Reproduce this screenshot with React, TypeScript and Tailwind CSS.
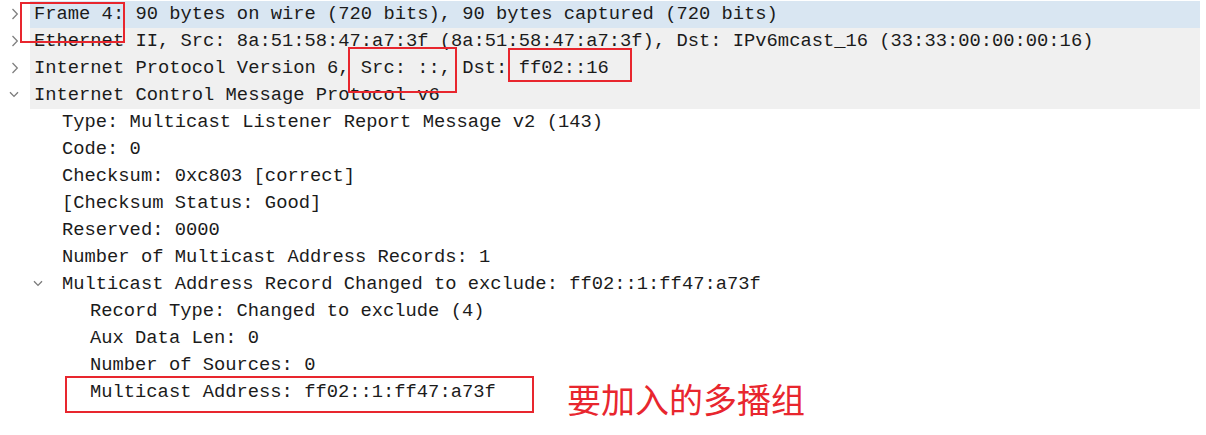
import React from "react";

type Row = {
  text: string;
  level: 0 | 1 | 2;
  arrow?: "right" | "down";
  bg?: "blue" | "gray";
};

const rows: Row[] = [
  { text: "Frame 4: 90 bytes on wire (720 bits), 90 bytes captured (720 bits)", level: 0, arrow: "right", bg: "blue" },
  { text: "Ethernet II, Src: 8a:51:58:47:a7:3f (8a:51:58:47:a7:3f), Dst: IPv6mcast_16 (33:33:00:00:00:16)", level: 0, arrow: "right", bg: "gray" },
  { text: "Internet Protocol Version 6, Src: ::, Dst: ff02::16", level: 0, arrow: "right", bg: "gray" },
  { text: "Internet Control Message Protocol v6", level: 0, arrow: "down", bg: "gray" },
  { text: "Type: Multicast Listener Report Message v2 (143)", level: 1 },
  { text: "Code: 0", level: 1 },
  { text: "Checksum: 0xc803 [correct]", level: 1 },
  { text: "[Checksum Status: Good]", level: 1 },
  { text: "Reserved: 0000", level: 1 },
  { text: "Number of Multicast Address Records: 1", level: 1 },
  { text: "Multicast Address Record Changed to exclude: ff02::1:ff47:a73f", level: 1, arrow: "down" },
  { text: "Record Type: Changed to exclude (4)", level: 2 },
  { text: "Aux Data Len: 0", level: 2 },
  { text: "Number of Sources: 0", level: 2 },
  { text: "Multicast Address: ff02::1:ff47:a73f", level: 2 },
];

const indentClass = ["pl-0", "pl-[28px]", "pl-[56px]"];

function ChevronRight() {
  return (
    <svg width="8" height="12" viewBox="0 0 8 12" className="block">
      <path d="M1.5 1 L6.3 6 L1.5 11" fill="none" stroke="#808080" strokeWidth="1.3" />
    </svg>
  );
}

function ChevronDown() {
  return (
    <svg width="10" height="7" viewBox="0 0 10 7" className="block">
      <path d="M1 1.2 L5 5.4 L9 1.2" fill="none" stroke="#7a7a7a" strokeWidth="1.3" />
    </svg>
  );
}

function TreeRow({ row }: { row: Row }) {
  const bgClass =
    row.bg === "blue" ? "bg-[#d9e6f2] mr-[6px]" : row.bg === "gray" ? "bg-[#f0f0f0] mr-[6px]" : "";
  let arrowPad = "pl-[11px]";
  if (row.arrow === "down" && row.level === 0) arrowPad = "pl-[9px]";
  if (row.arrow === "down" && row.level === 1) arrowPad = "pl-[5px]";
  return (
    <div className={`flex h-[27px] ${indentClass[row.level]}`}>
      <div className={`w-[30px] shrink-0 flex items-center ${arrowPad} pb-[2px]`}>
        {row.arrow === "right" && <ChevronRight />}
        {row.arrow === "down" && <ChevronDown />}
      </div>
      <div className={`flex-1 pl-[4px] leading-[27px] whitespace-pre ${bgClass}`}>{row.text}</div>
    </div>
  );
}

export default function App() {
  return (
    <div className="relative w-[1206px] h-[435px] bg-white overflow-hidden">
      <div
        className="pt-[1px] text-[18.8px] text-[#1b1b1b]"
        style={{ fontFamily: '"Liberation Mono", "DejaVu Sans Mono", monospace' }}
      >
        {rows.map((r, i) => (
          <TreeRow key={i} row={r} />
        ))}
      </div>

      {/* annotation overlays */}
      <div className="absolute left-[20px] top-[2px] w-[105px] h-[41px] border-2 border-[#e8262e]" />
      <div className="absolute left-[348px] top-[47px] w-[109px] h-[46px] border-2 border-[#e8262e]" />
      <div className="absolute left-[508px] top-[48px] w-[124px] h-[34px] border-2 border-[#e8262e]" />
      <div className="absolute left-[65px] top-[376px] w-[469px] h-[37px] border-2 border-[#e8262e]" />
      <div
        className="absolute left-[567px] top-[380px] text-[34px] leading-[38px] text-[#e8262e] whitespace-nowrap"
        style={{ fontFamily: '"Noto Sans CJK SC", "Noto Sans", sans-serif' }}
      >
        要加入的多播组
      </div>
    </div>
  );
}
